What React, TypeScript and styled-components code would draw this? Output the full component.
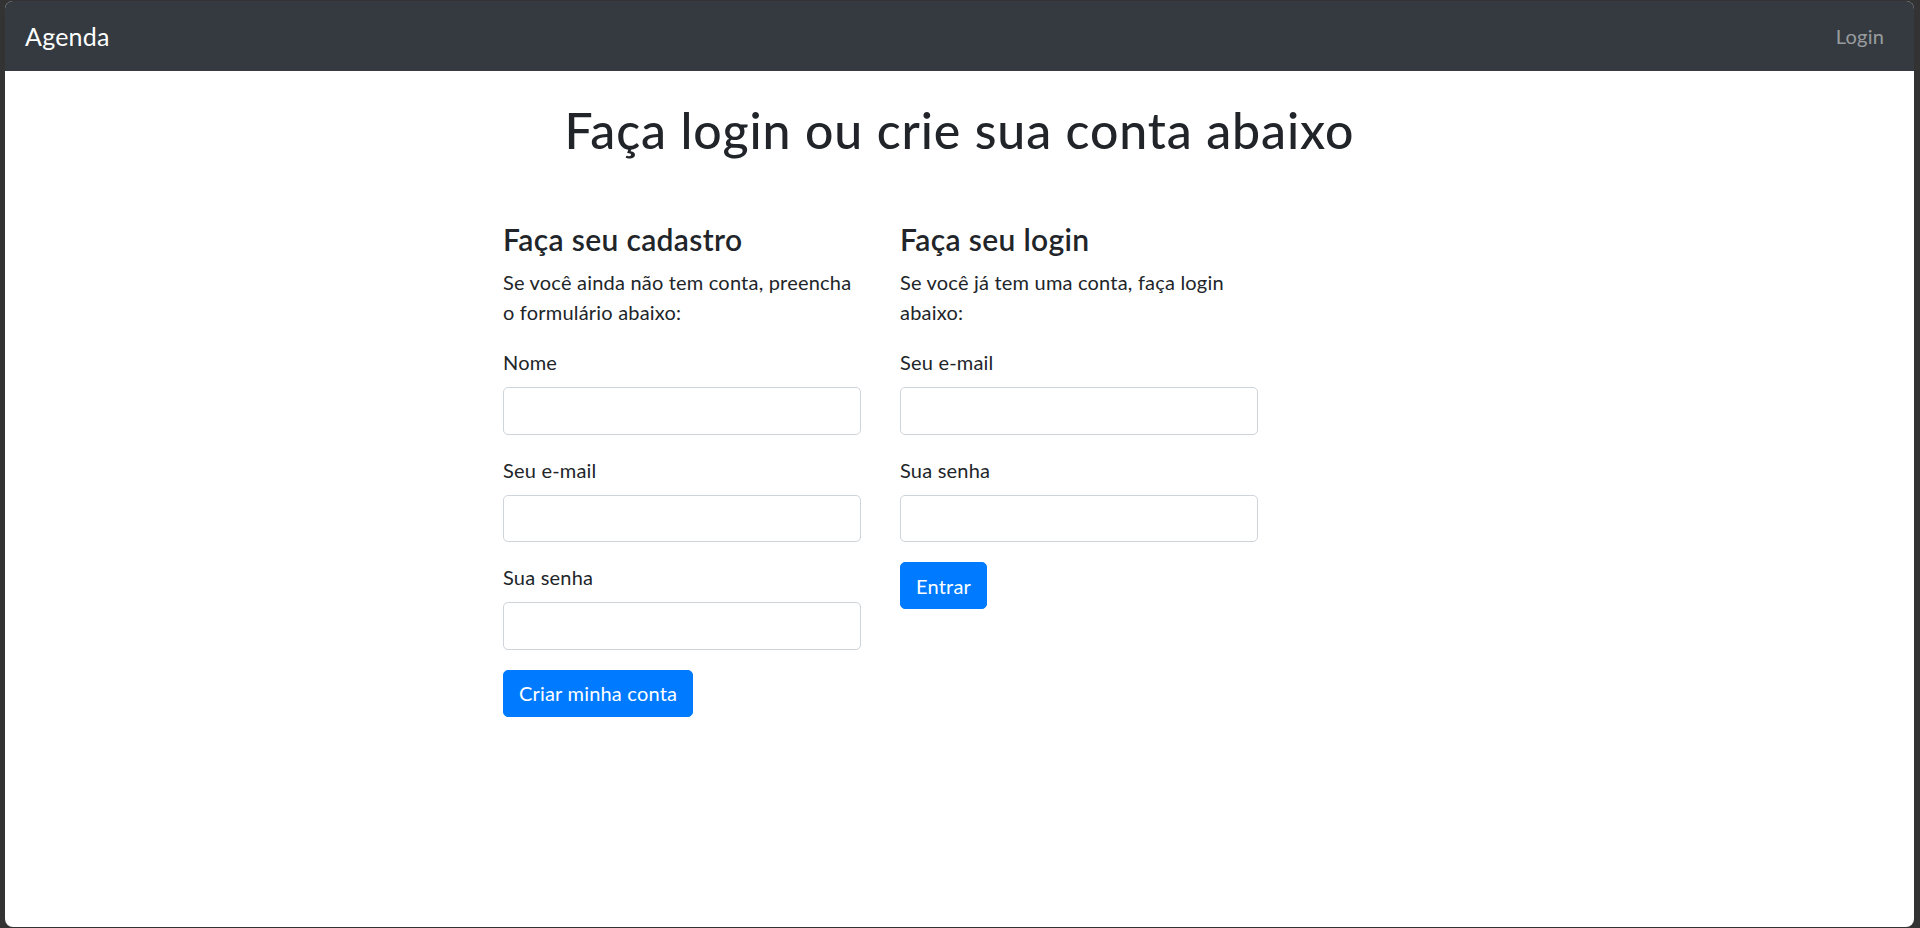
import React from 'react';
import styled, { createGlobalStyle } from 'styled-components';

const GlobalStyle = createGlobalStyle`
  html, body {
    margin: 0;
    padding: 0;
    background-color: #333333;
  }
  body {
    font-family: Lato, "Noto Sans", "Liberation Sans", sans-serif;
    letter-spacing: 0.2px;
    color: #212529;
  }
  * {
    box-sizing: border-box;
  }
`;

function App() {
  return (
    <Frame>
      <GlobalStyle />
      <Window>
        <Navbar>
          <Brand>Agenda</Brand>
          <NavLink href="#">Login</NavLink>
        </Navbar>
        <Title>Faça login ou crie sua conta abaixo</Title>
        <Columns>
          <Column>
            <Heading>Faça seu cadastro</Heading>
            <Lead>Se você ainda não tem conta, preencha o formulário abaixo:</Lead>
            <Field>
              <Label>Nome</Label>
              <Input type="text" />
            </Field>
            <Field>
              <Label>Seu e-mail</Label>
              <Input type="email" />
            </Field>
            <Field>
              <Label>Sua senha</Label>
              <Input type="password" />
            </Field>
            <Button>Criar minha conta</Button>
          </Column>
          <Column>
            <Heading>Faça seu login</Heading>
            <Lead>Se você já tem uma conta, faça login abaixo:</Lead>
            <Field>
              <Label>Seu e-mail</Label>
              <Input type="email" />
            </Field>
            <Field>
              <Label>Sua senha</Label>
              <Input type="password" />
            </Field>
            <Button>Entrar</Button>
          </Column>
        </Columns>
      </Window>
    </Frame>
  );
}

export default App;

const Frame = styled.div`
  height: 100vh;
  padding: 1px 6px 1px 5px;
  background-color: #333333;
`;

const Window = styled.div`
  height: 100%;
  background-color: #ffffff;
  border-radius: 8px;
  overflow: hidden;
`;

const Navbar = styled.nav`
  display: flex;
  align-items: center;
  justify-content: space-between;
  height: 70px;
  padding: 0 20px;
  background-color: #343a40;
`;

const Brand = styled.span`
  font-size: 25px;
  line-height: 36px;
  color: #ffffff;
`;

const NavLink = styled.a`
  padding: 0 10px;
  font-size: 20px;
  line-height: 30px;
  color: rgba(255, 255, 255, 0.5);
  text-decoration: none;
`;

const Title = styled.h1`
  margin: 29px 0 0;
  font-size: 50px;
  font-weight: 500;
  line-height: 60px;
  letter-spacing: 0.9px;
  text-align: center;
`;

const Columns = styled.div`
  display: flex;
  gap: 39px;
  margin-top: 61px;
  padding-left: 498px;
`;

const Column = styled.div`
  width: 358px;
`;

const Heading = styled.h4`
  margin: 0 0 10px;
  font-size: 30px;
  font-weight: 600;
  line-height: 36px;
  letter-spacing: 0.35px;
`;

const Lead = styled.p`
  margin: 0 0 20px;
  font-size: 20px;
  line-height: 30px;
`;

const Field = styled.div`
  margin-bottom: 20px;
`;

const Label = styled.label`
  display: block;
  margin-bottom: 10px;
  font-size: 20px;
  line-height: 30px;
`;

const Input = styled.input`
  display: block;
  width: 100%;
  height: 47.5px;
  padding: 7.5px 15px;
  border: 1px solid #ced4da;
  border-radius: 5px;
  font-size: 20px;
  font-family: inherit;
  color: #495057;
  background-color: #ffffff;
`;

const Button = styled.button`
  display: inline-block;
  padding: 7.5px 15px;
  border: 1px solid #007bff;
  border-radius: 5px;
  background-color: #007bff;
  color: #ffffff;
  font-family: inherit;
  font-size: 20px;
  line-height: 30px;
  letter-spacing: 0.2px;
  cursor: pointer;
`;
